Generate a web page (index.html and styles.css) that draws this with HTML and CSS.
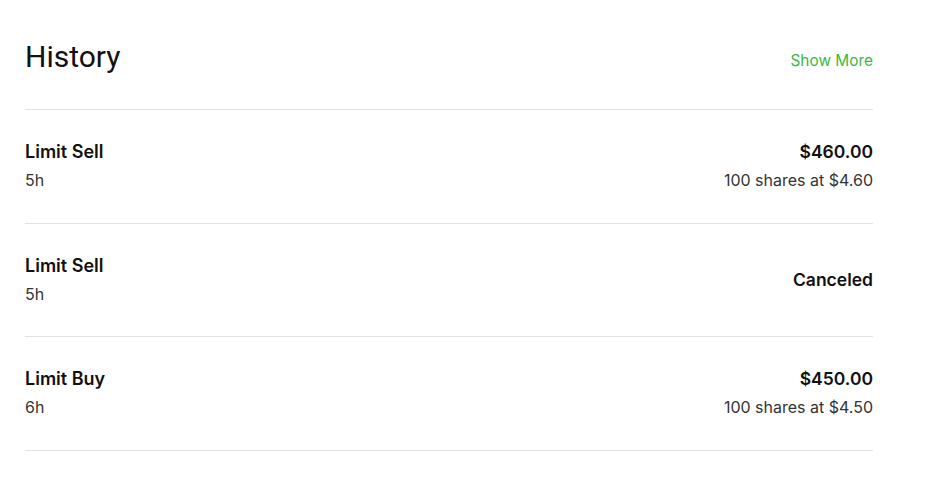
FILE: index.html
```html
<!DOCTYPE html>
<html>
<head>
<meta charset="utf-8">
<link rel="stylesheet" href="styles.css">
</head>
<body>
<section class="history">
  <header class="history-head">
    <h2 class="title">History</h2>
    <a class="more" href="#">Show More</a>
  </header>
  <div class="row">
    <div class="col">
      <div class="name">Limit Sell</div>
      <div class="sub">5h</div>
    </div>
    <div class="col right">
      <div class="name amount">$460.00</div>
      <div class="sub">100 shares at $4.60</div>
    </div>
  </div>
  <div class="row short">
    <div class="col">
      <div class="name">Limit Sell</div>
      <div class="sub">5h</div>
    </div>
    <div class="col right center">
      <div class="name amount">Canceled</div>
    </div>
  </div>
  <div class="row">
    <div class="col">
      <div class="name">Limit Buy</div>
      <div class="sub">6h</div>
    </div>
    <div class="col right">
      <div class="name amount">$450.00</div>
      <div class="sub">100 shares at $4.50</div>
    </div>
  </div>
</section>
</body>
</html>
```

FILE: styles.css
```css
html, body {
  margin: 0;
  background: #fff;
}
body {
  font-family: Inter, "Noto Sans", sans-serif;
  color: #1b1b1b;
}
.history {
  width: 848px;
  margin-left: 25px;
}
.history-head {
  display: flex;
  justify-content: space-between;
  align-items: center;
  padding: 38px 0 33px;
  border-bottom: 1px solid #e3e3e3;
}
.title {
  margin: 0;
  font-family: Roboto, sans-serif;
  font-weight: 400;
  font-size: 30px;
  line-height: 38px;
  color: #111;
}
.more {
  color: #3cb93c;
  text-decoration: none;
  font-size: 15.4px;
  line-height: 20px;
  margin-top: 8px;
}
.row {
  display: flex;
  justify-content: space-between;
  padding: 30px 0 31px;
  border-bottom: 1px solid #e3e3e3;
}
.row.short {
  padding-bottom: 30px;
}
.col {
  display: flex;
  flex-direction: column;
  gap: 4px;
}
.col.right {
  align-items: flex-end;
}
.col.center {
  justify-content: center;
}
.name {
  font-weight: 600;
  font-size: 18px;
  line-height: 24px;
  color: #111;
}
.name.amount {
  font-size: 17.5px;
}
.sub {
  font-size: 16px;
  line-height: 24px;
  color: #333;
}
```
